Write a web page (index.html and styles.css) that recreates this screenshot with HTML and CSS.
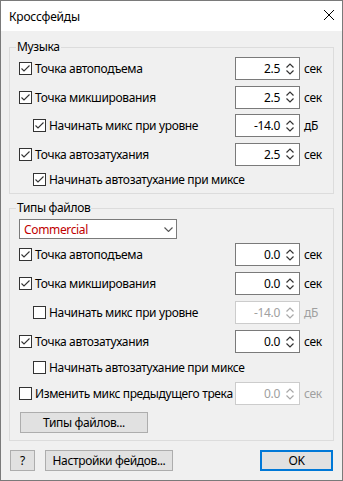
FILE: index.html
```html
<!DOCTYPE html>
<html lang="ru">
<head>
  <meta charset="UTF-8">
  <meta name="viewport" content="width=device-width, initial-scale=1.0">
  <title>Кроссфейды</title>
  <link rel="stylesheet" href="styles.css">
</head>
<body>
  <div class="dialog">
    <div class="titlebar">
      <span class="title">Кроссфейды</span>
      <svg class="close" width="10" height="10" viewBox="0 0 10 10"><path d="M0 0 L10 10 M10 0 L0 10" stroke="#000" stroke-width="1"/></svg>
    </div>
    <div class="content">
      <!-- Музыка -->
      <fieldset class="group music">
        <legend>Музыка</legend>
        <div class="rows">
          <div class="row">
            <label class="check"><span class="box on"><svg viewBox="0 0 11 11"><polyline points="1.5,5.5 4,8 9.5,2.5"/></svg></span>Точка автоподъема</label>
            <div class="spin"><span>2.5</span><svg class="arrows" viewBox="0 0 8 12"><polyline points="0.5,4.5 4,1 7.5,4.5"/><polyline points="0.5,7.5 4,11 7.5,7.5"/></svg></div>
            <span class="unit">сек</span>
          </div>
          <div class="row">
            <label class="check"><span class="box on"><svg viewBox="0 0 11 11"><polyline points="1.5,5.5 4,8 9.5,2.5"/></svg></span>Точка микширования</label>
            <div class="spin"><span>2.5</span><svg class="arrows" viewBox="0 0 8 12"><polyline points="0.5,4.5 4,1 7.5,4.5"/><polyline points="0.5,7.5 4,11 7.5,7.5"/></svg></div>
            <span class="unit">сек</span>
          </div>
          <div class="row">
            <label class="check sub"><span class="box on"><svg viewBox="0 0 11 11"><polyline points="1.5,5.5 4,8 9.5,2.5"/></svg></span>Начинать микс при уровне</label>
            <div class="spin"><span>-14.0</span><svg class="arrows" viewBox="0 0 8 12"><polyline points="0.5,4.5 4,1 7.5,4.5"/><polyline points="0.5,7.5 4,11 7.5,7.5"/></svg></div>
            <span class="unit">дБ</span>
          </div>
          <div class="row">
            <label class="check"><span class="box on"><svg viewBox="0 0 11 11"><polyline points="1.5,5.5 4,8 9.5,2.5"/></svg></span>Точка автозатухания</label>
            <div class="spin"><span>2.5</span><svg class="arrows" viewBox="0 0 8 12"><polyline points="0.5,4.5 4,1 7.5,4.5"/><polyline points="0.5,7.5 4,11 7.5,7.5"/></svg></div>
            <span class="unit">сек</span>
          </div>
          <div class="row short">
            <label class="check sub"><span class="box on"><svg viewBox="0 0 11 11"><polyline points="1.5,5.5 4,8 9.5,2.5"/></svg></span>Начинать автозатухание при миксе</label>
          </div>
        </div>
      </fieldset>

      <!-- Типы файлов -->
      <fieldset class="group types">
        <legend>Типы файлов</legend>
        <div class="select">
          <span>Commercial</span>
          <svg class="chev" width="9" height="5" viewBox="0 0 9 5"><polyline points="0.5,0.5 4.5,4.5 8.5,0.5"/></svg>
        </div>
        <div class="rows">
          <div class="row">
            <label class="check"><span class="box on"><svg viewBox="0 0 11 11"><polyline points="1.5,5.5 4,8 9.5,2.5"/></svg></span>Точка автоподъема</label>
            <div class="spin"><span>0.0</span><svg class="arrows" viewBox="0 0 8 12"><polyline points="0.5,4.5 4,1 7.5,4.5"/><polyline points="0.5,7.5 4,11 7.5,7.5"/></svg></div>
            <span class="unit">сек</span>
          </div>
          <div class="row">
            <label class="check"><span class="box on"><svg viewBox="0 0 11 11"><polyline points="1.5,5.5 4,8 9.5,2.5"/></svg></span>Точка микширования</label>
            <div class="spin"><span>0.0</span><svg class="arrows" viewBox="0 0 8 12"><polyline points="0.5,4.5 4,1 7.5,4.5"/><polyline points="0.5,7.5 4,11 7.5,7.5"/></svg></div>
            <span class="unit">сек</span>
          </div>
          <div class="row off">
            <label class="check sub"><span class="box"></span>Начинать микс при уровне</label>
            <div class="spin"><span>-14.0</span><svg class="arrows" viewBox="0 0 8 12"><polyline points="0.5,4.5 4,1 7.5,4.5"/><polyline points="0.5,7.5 4,11 7.5,7.5"/></svg></div>
            <span class="unit">дБ</span>
          </div>
          <div class="row">
            <label class="check"><span class="box on"><svg viewBox="0 0 11 11"><polyline points="1.5,5.5 4,8 9.5,2.5"/></svg></span>Точка автозатухания</label>
            <div class="spin"><span>0.0</span><svg class="arrows" viewBox="0 0 8 12"><polyline points="0.5,4.5 4,1 7.5,4.5"/><polyline points="0.5,7.5 4,11 7.5,7.5"/></svg></div>
            <span class="unit">сек</span>
          </div>
          <div class="row short">
            <label class="check sub"><span class="box"></span>Начинать автозатухание при миксе</label>
          </div>
          <div class="row off">
            <label class="check"><span class="box"></span>Изменить микс предыдущего трека</label>
            <div class="spin"><span>0.0</span><svg class="arrows" viewBox="0 0 8 12"><polyline points="0.5,4.5 4,1 7.5,4.5"/><polyline points="0.5,7.5 4,11 7.5,7.5"/></svg></div>
            <span class="unit">сек</span>
          </div>
        </div>
        <button class="btn types-btn">Типы файлов...</button>
      </fieldset>

      <div class="footer">
        <button class="btn help">?</button>
        <button class="btn fades">Настройки фейдов...</button>
        <button class="btn ok">OK</button>
      </div>
    </div>
  </div>
</body>
</html>
```

FILE: styles.css
```css
* {
  box-sizing: border-box;
}

body {
  margin: 0;
  font-family: "Segoe UI", "Noto Sans", "DejaVu Sans", sans-serif;
  font-size: 12px;
  letter-spacing: -0.35px;
  color: #000;
}

.dialog {
  width: 343px;
  height: 481px;
  border: 1px solid #7a7a7a;
  background: #f0f0f0;
  display: flex;
  flex-direction: column;
}

.titlebar {
  height: 30px;
  background: #fff;
  display: flex;
  align-items: center;
  justify-content: space-between;
  padding: 0 8px;
}

.titlebar .title {
  letter-spacing: -0.2px;
}

.titlebar .close {
  margin-bottom: 2px;
}

.content {
  flex: 1;
  padding: 8px 8px 0 8px;
}

.group {
  margin: 0;
  min-width: 0;
  border: 1px solid #dcdcdc;
  padding: 2px 0 5px 9px;
}

.group legend {
  padding: 0 1px;
  margin-left: -3px;
  line-height: 16px;
}

.types {
  margin-top: 6px;
  padding: 3px 0 7px 9px;
}

.rows {
  display: flex;
  flex-direction: column;
  gap: 5.5px;
}

.types .rows {
  gap: 6px;
  margin-top: 4px;
}

.row {
  display: flex;
  align-items: center;
  height: 23px;
}

.row.short {
  height: 17px;
}

.check {
  flex: 1;
  min-width: 0;
  display: flex;
  align-items: center;
  gap: 3px;
  white-space: nowrap;
}

.check.sub {
  padding-left: 14px;
}

.box {
  width: 13px;
  height: 13px;
  flex: none;
  border: 1px solid #333;
  background: #fff;
}

.box svg {
  display: block;
  width: 11px;
  height: 11px;
  fill: none;
  stroke: #333;
  stroke-width: 1.1;
}

.spin {
  flex: none;
  width: 65px;
  height: 23px;
  border: 1px solid #7a7a7a;
  background: #fff;
  display: flex;
  align-items: center;
  justify-content: flex-end;
  padding-right: 5px;
}

.spin .arrows {
  width: 8px;
  height: 12px;
  margin-left: 6px;
  fill: none;
  stroke: #333;
  stroke-width: 1.2;
}

.unit {
  flex: none;
  width: 29px;
  margin-left: 4px;
}

.row.off .spin {
  border-color: #cccccc;
  color: #a0a0a0;
}

.row.off .spin .arrows {
  stroke: #a8a8a8;
}

.row.off .unit {
  color: #a0a0a0;
}

.select {
  width: 158px;
  height: 20px;
  border: 1px solid #7a7a7a;
  background: #fff;
  color: #c00000;
  display: flex;
  align-items: center;
  justify-content: space-between;
  padding: 0 3px 0 4px;
}

.select .chev {
  fill: none;
  stroke: #555;
  stroke-width: 1.1;
}

.btn {
  height: 21px;
  padding: 0;
  border: 1px solid #adadad;
  background: #e1e1e1;
  font: inherit;
  letter-spacing: inherit;
  color: #000;
}

.types-btn {
  width: 128px;
  margin: 7px 0 0 1px;
  display: block;
}

.footer {
  display: flex;
  gap: 10px;
  margin-top: 9px;
  padding: 0 1px;
}

.help {
  width: 25px;
}

.fades {
  width: 128px;
}

.ok {
  width: 73px;
  margin-left: auto;
  border: 2px solid #0078d7;
}
```
